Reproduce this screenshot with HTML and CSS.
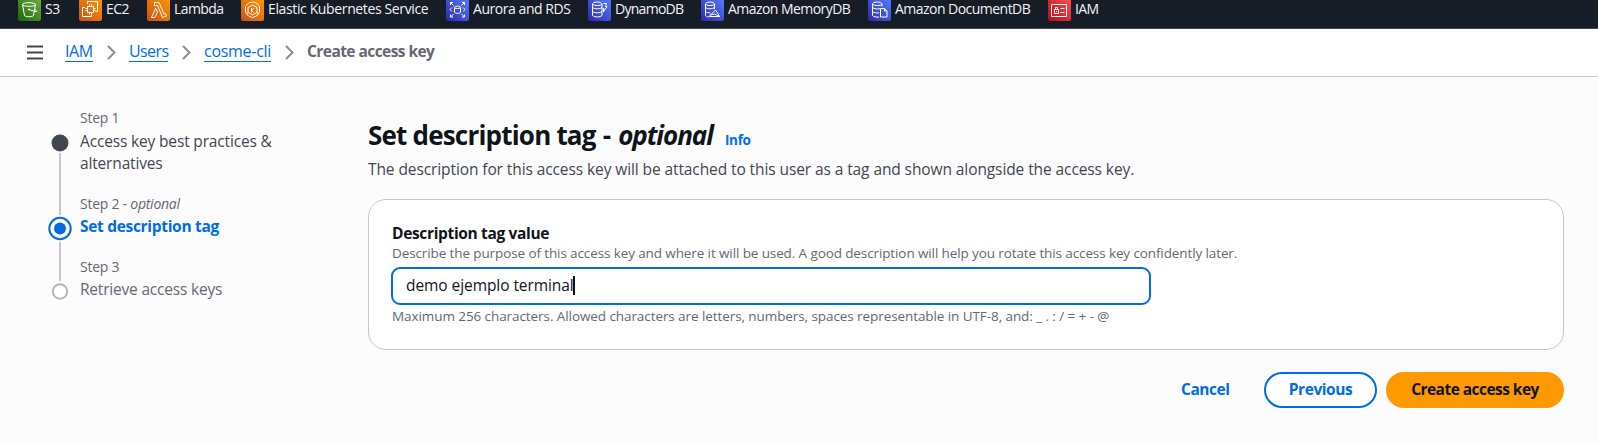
FILE: index.html
```
<!DOCTYPE html>
<html lang="en">
<head>
<meta charset="utf-8">
<title>Create access key | IAM</title>
<link rel="stylesheet" href="styles.css">
</head>
<body>
<svg width="0" height="0" class="defs" aria-hidden="true">
  <defs>
    <linearGradient id="green" x1="0" y1="1" x2="1" y2="0"><stop offset="0" stop-color="#1b660f"/><stop offset="1" stop-color="#6cae3e"/></linearGradient>
    <linearGradient id="orange" x1="0" y1="1" x2="1" y2="0"><stop offset="0" stop-color="#c8511b"/><stop offset="1" stop-color="#f90"/></linearGradient>
    <linearGradient id="blue" x1="0" y1="1" x2="1" y2="0"><stop offset="0" stop-color="#2e27ad"/><stop offset="1" stop-color="#527fff"/></linearGradient>
    <linearGradient id="red" x1="0" y1="1" x2="1" y2="0"><stop offset="0" stop-color="#bd0816"/><stop offset="1" stop-color="#ff5252"/></linearGradient>
  </defs>
</svg>
<nav class="services">
  <a class="service s3"><svg class="icon" viewBox="0 0 23 23"><rect width="23" height="23" rx="2" fill="url(#green)"/><path d="M4.500 6.500l2 11c1 1.600 8 1.600 9 0l2-11M11 11.500l6 2c2.500.8 2.200-1.200-.3-2"/><ellipse cx="11" cy="6.500" rx="6.500" ry="1.800"/><circle cx="11" cy="11.500" r=".7"/></svg><span>S3</span></a>
  <a class="service ec2"><svg class="icon" viewBox="0 0 23 23"><rect width="23" height="23" rx="2" fill="url(#orange)"/><path d="M8.500 8.500h6v6h-6zM10.500 8.500v-2M12.500 8.500v-2M10.500 14.500v2M12.500 14.500v2M8.500 10.500h-2M8.500 12.500h-2M14.500 10.500h2M14.500 12.500h2M8.500 6v-2.500h10v10h-2M6 9.500h-2.500v9h9v-2"/></svg><span>EC2</span></a>
  <a class="service lambda"><svg class="icon" viewBox="0 0 23 23"><rect width="23" height="23" rx="2" fill="url(#orange)"/><path d="M7.500 4.500h4.500l5 11.500 1.500-.5 1 2.500-4 1.500L10.500 7.500h-3zM8.700 10.300l1.800 3.700-2.700 5.500H4.500z"/></svg><span>Lambda</span></a>
  <a class="service eks"><svg class="icon" viewBox="0 0 23 23"><rect width="23" height="23" rx="2" fill="url(#orange)"/><path d="M7.500 5L11.500 4l4 1 3 3.500v6l-3 3.500-4 1.500-4-1.500-3-3.500v-6zM11.500 7l4.500 2.500v5L11.500 17 7 14.500v-5zM10.500 9.800v4.700M13 9.800l-2.500 2.400 2.500 2.300M7 14.500L5 16M16 14.500l2 1.500"/></svg><span>Elastic Kubernetes Service</span></a>
  <a class="service aurora"><svg class="icon" viewBox="0 0 23 23"><rect width="23" height="23" rx="2" fill="url(#blue)"/><path d="M4.500 7V4.500H7M4.500 4.500l3 3M16 4.500h2.500V7M18.500 4.500l-3 3M4.500 16.500V19H7M4.500 19l3-3M16 19h2.500v-2.500M18.500 19l-3-3M8.500 9.500v5c1 1.200 5 1.200 6 0v-5M5.800 9.500l-1.800 2 1.800 2M17.200 9.500l1.800 2-1.800 2"/><ellipse cx="11.500" cy="9.300" rx="3" ry="1.200"/></svg><span>Aurora and RDS</span></a>
  <a class="service dynamo"><svg class="icon" viewBox="0 0 23 23"><rect width="23" height="23" rx="2" fill="url(#blue)"/><path d="M4.500 6v11.500c1.500 2 8 2 9.500 0V6M4.500 9.500c1.500 1.800 8 1.800 9.500 0M4.500 13.500c1.500 1.800 8 1.800 9.500 0M15.500 5.500h3l-1 3h1.500l-3.700 5.500.5-3.500h-1.500"/><ellipse cx="9.200" cy="5.800" rx="4.700" ry="1.800"/></svg><span>DynamoDB</span></a>
  <a class="service memory"><svg class="icon" viewBox="0 0 23 23"><rect width="23" height="23" rx="2" fill="url(#blue)"/><path d="M4.500 6v11.500c.5.800 1.500 1.200 3 1.500M13.500 6v5M4.500 9.500c1.500 1.800 7.500 1.800 9 0M4.500 13.500c1 1 3 1.500 5 1.300M8 18.500l6.500-6.500 2 3 2 3.500zM9.500 17l4-1 5 2.500"/><ellipse cx="9" cy="5.800" rx="4.500" ry="1.800"/></svg><span>Amazon MemoryDB</span></a>
  <a class="service document"><svg class="icon" viewBox="0 0 23 23"><rect width="23" height="23" rx="2" fill="url(#blue)"/><path d="M4.500 6v11.500c1 1.300 4 1.800 6.500 1.500M14 6v2.500M4.500 9.500c1.500 1.500 5 1.800 7.500 1.200M4.500 13.500c1.500 1.300 4 1.700 6.500 1.300M12.500 10.500h4l2.500 2.500v6h-6.500zM16.500 10.500V13H19"/><ellipse cx="9.200" cy="5.800" rx="4.700" ry="1.800"/></svg><span>Amazon DocumentDB</span></a>
  <a class="service iam"><svg class="icon" viewBox="0 0 23 23"><rect width="23" height="23" rx="2" fill="url(#red)"/><path d="M3.500 6.500h15v12h-15zM6.500 11.500h4v4h-4zM7.500 11.500v-2h2v2M12.500 10.500h4M12.500 14.500h4M8.500 13v1"/></svg><span>IAM</span></a>
</nav>

<header class="topbar">
  <svg class="menu" width="16" height="15" viewBox="0 0 16 15"><path d="M0 1.500h16M0 7.500h16M0 13.500h16"/></svg>
  <a class="crumb c-iam">IAM</a>
  <svg class="chevron" width="9" height="15" viewBox="0 0 9 15"><path d="M1 1l6.500 6.500L1 14"/></svg>
  <a class="crumb c-users">Users</a>
  <svg class="chevron" width="9" height="15" viewBox="0 0 9 15"><path d="M1 1l6.500 6.500L1 14"/></svg>
  <a class="crumb c-user">cosme-cli</a>
  <svg class="chevron" width="9" height="15" viewBox="0 0 9 15"><path d="M1 1l6.500 6.500L1 14"/></svg>
  <span class="current">Create access key</span>
</header>

<div class="layout">
  <aside class="steps">
    <svg class="track" width="24" height="176" viewBox="0 0 24 176">
      <path class="rail" d="M12 28v62M12 117v39"/>
      <circle class="done" cx="12" cy="18" r="8.500"/>
      <circle class="ring" cx="12" cy="103.500" r="10.700"/>
      <circle class="dot" cx="12" cy="103.500" r="6"/>
      <circle class="todo" cx="12" cy="166.500" r="7.200"/>
    </svg>
    <ol class="step-list">
      <li class="step first"><div class="step-no">Step 1</div><div class="step-name">Access key best practices &amp;<br>alternatives</div></li>
      <li class="step second"><div class="step-no">Step 2 - <i>optional</i></div><div class="step-name active">Set description tag</div></li>
      <li class="step"><div class="step-no">Step 3</div><div class="step-name pending">Retrieve access keys</div></li>
    </ol>
  </aside>

  <main class="content">
    <div class="heading"><h1>Set description tag <span class="dash">-</span> <i>optional</i></h1><a class="info">Info</a></div>
    <p class="lead">The description for this access key will be attached to this user as a tag and shown alongside the access key.</p>
    <section class="card">
      <div class="label">Description tag value</div>
      <div class="hint">Describe the purpose of this access key and where it will be used. A good description will help you rotate this access key confidently later.</div>
      <div class="field"><span>demo ejemplo terminal</span><b class="caret"></b></div>
      <div class="hint constraint">Maximum 256 characters. Allowed characters are letters, numbers, spaces representable in UTF-8, and: _ . : / = + - @</div>
    </section>
    <div class="actions">
      <a class="btn cancel">Cancel</a>
      <a class="btn previous">Previous</a>
      <a class="btn primary">Create access key</a>
    </div>
  </main>
</div>
</body>
</html>
```
FILE: styles.css
```
* { box-sizing: border-box; }
body { margin: 0; height: 442px; overflow: hidden; background: #fcfcfd; color: #424650; font: 15.5px/22px "Open Sans", "Noto Sans", sans-serif; white-space: nowrap; }
.defs { display: block; }
.services { display: grid; grid-template-columns: 61px 68px 94px 205px 142px 113px 167px 180px 90px; height: 29px; padding-left: 18px; background: #161d26; border-bottom: 1px solid #424650; overflow: hidden; }
.service { display: flex; gap: 4px; height: 23px; margin-top: -2px; color: #f3f3f7; font-size: 14px; font-weight: 500; line-height: 22px; }
.icon { width: 23px; height: 23px; flex: none; fill: none; stroke: #fff; stroke-width: 1; }
.icon rect { stroke: none; }
.s3 span { letter-spacing: -.4px; }
.ec2 span, .document span { letter-spacing: -.53px; }
.aurora span { letter-spacing: -.45px; }
.lambda span { letter-spacing: -.6px; }
.memory span { letter-spacing: -.55px; }
.eks span { letter-spacing: -.37px; }
.dynamo span { letter-spacing: -.72px; }
.iam span { letter-spacing: -.6px; }

.topbar { display: flex; height: 48px; padding: 12px 0 0 27px; background: #fff; border-bottom: 1px solid #c6c6cd; line-height: 21px; }
.menu { margin: 4px 22px 0 0; stroke: #424650; stroke-width: 2; }
.crumb { height: 21px; border-bottom: 1px solid #006ce0; color: #006ce0; font-size: 16px; }
.c-iam { width: 28px; letter-spacing: -.4px; }
.c-users { width: 39px; letter-spacing: -.6px; }
.c-user { width: 67px; letter-spacing: -.28px; }
.chevron { flex: none; margin: 4px 13px 0 14px; fill: none; stroke: #8c8c94; stroke-width: 2; }
.current { color: #656871; font-weight: 700; letter-spacing: -.56px; }

.layout { display: grid; grid-template-columns: 320px 1196px; padding: 31px 0 0 48px; }
.steps { display: flex; gap: 8px; }
.track { margin-top: 17px; flex: none; }
.rail { stroke: #c6c6cd; stroke-width: 2; }
.done { fill: #424650; }
.ring { fill: #fff; stroke: #006ce0; stroke-width: 2; }
.dot { fill: #006ce0; }
.todo { fill: #fff; stroke: #b4b4bb; stroke-width: 2; }
.step-list { list-style: none; margin: 0; padding: 0; }
.first { height: 86px; }
.second { height: 63px; }
.step-no { height: 20px; line-height: 20px; color: #656871; font-size: 14px; letter-spacing: -.25px; }
.step-no i { letter-spacing: -.25px; }
.step-name { padding-top: 1px; letter-spacing: -.16px; }
.first .step-name { padding-top: 2px; }
.active { color: #006ce0; font-weight: 700; letter-spacing: -.31px; }
.pending { color: #656871; letter-spacing: -.2px; }

.heading { display: flex; height: 32px; margin-top: 11px; align-items: baseline; }
h1 { width: 356px; margin: 0; color: #0f141a; font-size: 26px; line-height: 32px; font-weight: 700; letter-spacing: -.8px; }
.dash { margin: 0 2px 0 1px; }
h1 i { letter-spacing: -1.05px; }
.info { margin-left: 1px; color: #006ce0; font-size: 13.5px; font-weight: 700; letter-spacing: -.35px; }
.lead { margin: 7px 0 19px; letter-spacing: -.095px; }
.card { height: 151px; padding: 22px 23px; background: #fff; border: 1px solid #c6c6cd; border-radius: 18px; }
.label { height: 21px; color: #0f141a; font-weight: 700; letter-spacing: -.34px; }
.hint { height: 20px; line-height: 20px; color: #656871; font-size: 13.5px; letter-spacing: -.11px; }
.constraint { margin-top: 1px; letter-spacing: -.08px; }
.field { display: flex; align-items: center; width: 760px; height: 38px; margin: 4px 0 0 -1px; padding: 0 0 2px 13px; border: 2px solid #006ce0; border-radius: 9px; color: #0f141a; letter-spacing: -.07px; }
.caret { width: 2px; height: 19px; margin-left: -1px; background: #0f141a; }
.actions { display: flex; justify-content: flex-end; margin-top: 22px; }
.btn { height: 36px; border-radius: 18px; color: #006ce0; font-weight: 700; line-height: 34px; text-align: center; letter-spacing: -.46px; }
.cancel { width: 48px; margin-right: 35px; }
.previous { width: 113px; margin-right: 9px; background: #fff; border: 2px solid #006ce0; line-height: 30px; }
.primary { width: 178px; background: #f90; color: #0f141a; letter-spacing: -.54px; }
```
